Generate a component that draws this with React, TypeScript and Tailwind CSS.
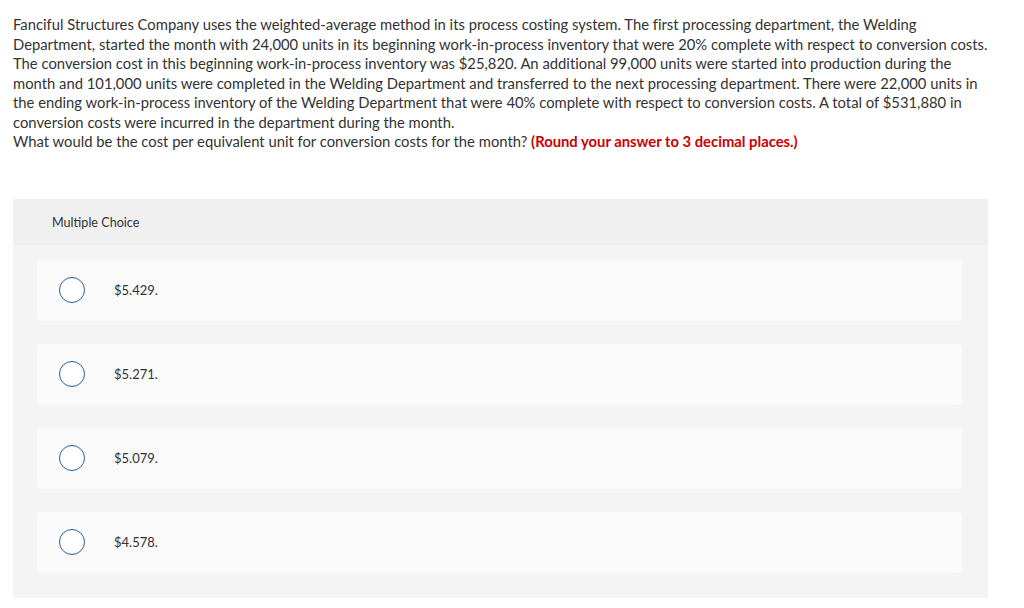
import React from "react";

const lines = [
  "Fanciful Structures Company uses the weighted-average method in its process costing system. The first processing department, the Welding",
  "Department, started the month with 24,000 units in its beginning work-in-process inventory that were 20% complete with respect to conversion costs.",
  "The conversion cost in this beginning work-in-process inventory was $25,820. An additional 99,000 units were started into production during the",
  "month and 101,000 units were completed in the Welding Department and transferred to the next processing department. There were 22,000 units in",
  "the ending work-in-process inventory of the Welding Department that were 40% complete with respect to conversion costs. A total of $531,880 in",
  "conversion costs were incurred in the department during the month.",
];

const choices = ["$5.429.", "$5.271.", "$5.079.", "$4.578."];

export default function App() {
  return (
    <div className="bg-white w-[1024px] h-[608px] overflow-hidden text-[#333] font-['Lato',sans-serif]">
      <div className="pl-[13px] pt-[15px] text-[14.8px] leading-[19.5px] [font-variant-ligatures:none]">
        {lines.map((l) => (
          <div key={l} className="whitespace-nowrap">{l}</div>
        ))}
        <div className="whitespace-nowrap">
          What would be the cost per equivalent unit for conversion costs for the month?{" "}
          <span className="text-[#c00] font-bold">(Round your answer to 3 decimal places.)</span>
        </div>
      </div>

      <div className="ml-[13px] mt-[47px] w-[975px] bg-[#f4f4f4] pb-[25px]">
        <div className="bg-[#f0f0f0] h-[46px] flex items-center pl-[39px] pt-[3px] text-[12.6px]">Multiple Choice</div>
        <div className="flex flex-col gap-[23px] pt-[15px] px-[24px] pr-[26px]">
          {choices.map((c) => (
            <div key={c} className="bg-[#fafafa] h-[61px] rounded-sm flex items-center pl-[22px]">
              <span className="w-[26px] h-[26px] rounded-full border border-[#2a6099] bg-white shrink-0" />
              <span className="ml-[29px] pt-[1px] text-[13px]">{c}</span>
            </div>
          ))}
        </div>
      </div>
    </div>
  );
}
